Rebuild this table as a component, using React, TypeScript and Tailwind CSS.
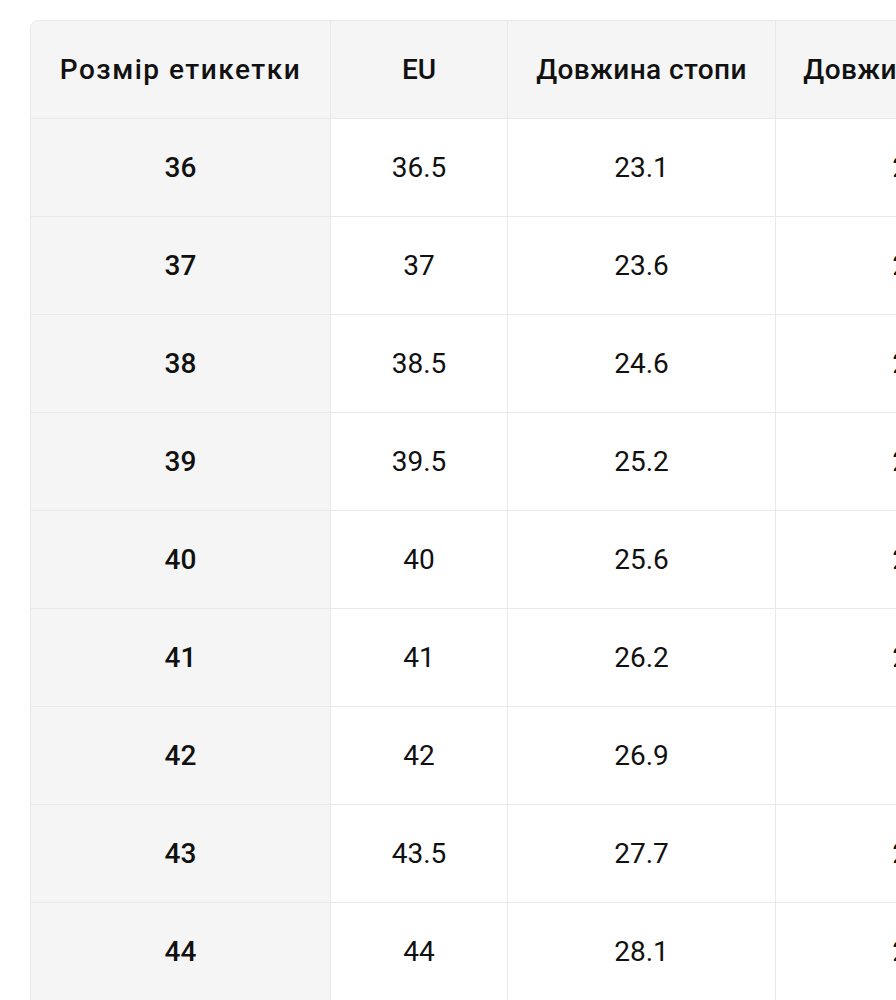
const headers = [
  { label: "Розмір етикетки", tracking: "tracking-[1.5px]" },
  { label: "EU", tracking: "" },
  { label: "Довжина стопи", tracking: "tracking-[0.4px]" },
  { label: "Довжина устілки", tracking: "tracking-[0.4px]" },
];

const rows = [
  ["36", "36.5", "23.1", "23.5"],
  ["37", "37", "23.6", "24.0"],
  ["38", "38.5", "24.6", "25.0"],
  ["39", "39.5", "25.2", "25.5"],
  ["40", "40", "25.6", "26.0"],
  ["41", "41", "26.2", "26.5"],
  ["42", "42", "26.9", "27"],
  ["43", "43.5", "27.7", "28.0"],
  ["44", "44", "28.1", "28.5"],
];

export default function App() {
  return (
    <div
      className="w-[896px] h-[1000px] overflow-hidden bg-white text-[#111111]"
      style={{ fontFamily: "Roboto, 'Noto Sans', sans-serif" }}
    >
      <div className="pl-[30px] pt-[20px]">
        <div className="w-[1034px] rounded-tl-[8px] border border-[#e9e9e9] overflow-hidden">
          {/* Header */}
          <div className="grid grid-cols-[300px_177px_268px_288px] bg-[#f5f5f5]">
            {headers.map((h) => (
              <div
                key={h.label}
                className={`h-[98px] flex items-center justify-center border-r border-b border-[#e9e9e9] text-[28px] font-medium whitespace-nowrap ${h.tracking}`}
              >
                {h.label}
              </div>
            ))}
          </div>

          {/* Body */}
          {rows.map((r) => (
            <div key={r[0]} className="grid grid-cols-[300px_177px_268px_288px]">
              {r.map((v, i) => (
                <div
                  key={i}
                  className={
                    i === 0
                      ? "h-[98px] flex items-center justify-center border-r border-b border-[#e9e9e9] bg-[#f5f5f5] text-[28px] font-medium"
                      : "h-[98px] flex items-center justify-center border-r border-b border-[#e9e9e9] bg-white text-[28px]"
                  }
                >
                  {v}
                </div>
              ))}
            </div>
          ))}
        </div>
      </div>
    </div>
  );
}
